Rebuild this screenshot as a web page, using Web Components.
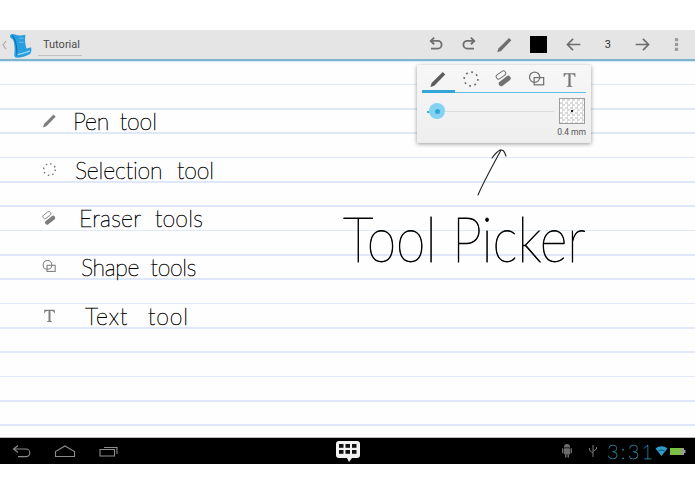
<!DOCTYPE html>
<html><head><meta charset="utf-8"><style>
html,body{margin:0;padding:0;background:#fff;font-family:Roboto,"Liberation Sans",sans-serif}
body{width:695px;height:494px;overflow:hidden}
</style></head><body>
<note-app>
  <action-bar title-text="Tutorial"></action-bar>
  <note-canvas>
    <note-row icon="pen" indent="15" track="-.1" word="4">Pen tool</note-row>
    <note-row icon="select" indent="17" track="-.15" word="8">Selection tool</note-row>
    <note-row icon="eraser" indent="21" track=".25" word="7">Eraser tools</note-row>
    <note-row icon="shape" indent="23" track="-.3" word="5">Shape tools</note-row>
    <note-row icon="text" indent="27" track=".9" word="12">Text tool</note-row>
    <tool-picker></tool-picker>
    <ink-callout></ink-callout>
  </note-canvas>
  <nav-bar></nav-bar>
</note-app>
<script>
const ICONS={
 pen:'<path d="M2.500 19l1.300-4.200L15.500 3.200l2.600 2.600L6.600 17.600z" fill="currentColor"/>',
 select:'<circle cx="10.500" cy="10.500" r="7.200" fill="none" stroke="currentColor" stroke-width="1.800" stroke-dasharray="1.900 3.750"/>',
 eraser:'<rect x="1.800" y="3.800" width="11" height="5" rx="2.300" transform="rotate(-36 7.300 6.300)" fill="none" stroke="currentColor" stroke-width="1"/><rect x="4" y="10" width="14.500" height="5.200" rx="2.500" transform="rotate(-38 11.200 12.600)" fill="currentColor"/>',
 shape:'<circle cx="8" cy="8.600" r="5.400" fill="none" stroke="currentColor" stroke-width="1.300"/><rect x="7.500" y="9" width="10" height="7.600" fill="none" stroke="currentColor" stroke-width="1.300"/>',
 text:'<path d="M4 3.500h13v4.200h-.8c-.3-2-1-2.900-3-2.900h-1.500v11.500c0 1 .4 1.300 1.900 1.400v.8H7.400v-.8c1.500-.1 1.900-.4 1.900-1.400V4.800H7.800c-2 0-2.700.9-3 2.900H4z" fill="currentColor"/>',
 undo:'<path d="M6 6.500h7a4 4 0 0 1 0 8.500H5.500" fill="none" stroke="currentColor" stroke-width="2"/><path d="M9 2.800L5.200 6.500 9 10.200" fill="none" stroke="currentColor" stroke-width="2"/>',
 redo:'<path d="M15 6.500H8a4 4 0 0 0 0 8.500h7.500" fill="none" stroke="currentColor" stroke-width="2"/><path d="M12 2.800l3.800 3.700L12 10.200" fill="none" stroke="currentColor" stroke-width="2"/>',
 left:'<path d="M18 10.500H4M10 4.300l-6.200 6.200 6.200 6.200" fill="none" stroke="currentColor" stroke-width="1.800"/>',
 right:'<path d="M3 10.500h14M11 4.300l6.200 6.200-6.200 6.200" fill="none" stroke="currentColor" stroke-width="1.800"/>',
 dots:'<rect x="8.700" y="3.500" width="3.600" height="3.400"/><rect x="8.700" y="8.800" width="3.600" height="3.400"/><rect x="8.700" y="14.100" width="3.600" height="3.400"/>'
};
function svg(n,s){return `<svg width="${s}" height="${s}" viewBox="0 0 21 21" fill="currentColor" style="display:block">${ICONS[n]}</svg>`}

customElements.define('note-app',class extends HTMLElement{constructor(){super();this.attachShadow({mode:'open'}).innerHTML=`<style>
:host{display:flex;flex-direction:column;width:695px;height:494px;padding-top:30px;box-sizing:border-box;background:#fff}
::slotted(note-canvas){flex:1;min-height:0}
</style><slot></slot><div style="height:30px;background:#fff;flex:none"></div>`}});

customElements.define('action-bar',class extends HTMLElement{constructor(){super();
const items=['undo','redo','pen','swatch','left','num','right','dots'].map(n=>{
 if(n==='swatch')return '<div class="it"><div class="sw"></div></div>';
 if(n==='num')return '<div class="it num">3</div>';
 return `<div class="it${n==='dots'?' dim':''}">${svg(n,19)}</div>`}).join('');
this.attachShadow({mode:'open'}).innerHTML=`<style>
:host{display:flex;flex:none;align-items:center;height:29px;background:#e5e5e5;border-bottom:2px solid #7db4cf;box-shadow:0 1px 1px rgba(120,190,220,.25);position:relative;z-index:2;color:#6e6e6e}
.chev{width:5px;margin-left:2px;color:#a5a5a5}
.logo{margin-left:2px;width:23px;height:26px;margin-top:2px}
.title{margin-left:6px;padding:0 5px 4px;width:34px;font:11px/13px Roboto,sans-serif;color:#4a4a4a;border-bottom:1px solid #c4c4c4;margin-top:4px;white-space:nowrap;box-sizing:content-box}
.sp{flex:1}
.acts{display:flex;padding-right:1px}
.it{width:34.500px;height:29px;display:flex;align-items:center;justify-content:center}
.dim{color:#9a9a9a}
.sw{width:17px;height:17px;background:#000}
.num{font:11px Roboto,sans-serif;color:#333}
</style>
<svg class="chev" viewBox="0 0 5 10" height="10"><path d="M4 1L1 5l3 4" fill="none" stroke="currentColor" stroke-width="1.100"/></svg>
<svg class="logo" viewBox="0 0 23 26"><path d="M1 2.800C1.500.8 4 .5 6 1.500c3 1.300 7 1.200 10.500.2C15.500 6 16 11 17.500 15.500c1.800-.3 3.500-.9 4.500-1.300.7 2.500.5 5-1 6.800-4 2-9 3.800-13 3.800-1.500 0-2.500-.8-2.800-2.500C5.700 19 6 14 5 9.500 4.500 7 3.500 6 2.500 5.500 1.500 5 .8 4 1 2.800z" fill="#2a9fe0"/><path d="M3 2.500c2.300 1.500 3.300 5 4.200 10 .6 3.500 1.200 7 .6 10" fill="none" stroke="#0f73b0" stroke-width="1.300"/><path d="M8.500 21.500c3.500-.4 8-2 12.500-3.700" fill="none" stroke="#8ed8fa" stroke-width="1.400"/><path d="M10 5c1.500.5 3 .5 4.500.2M10 9c1.500.5 3 .5 4.500.2" stroke="#6cc4f2" stroke-width="1" fill="none"/></svg>
<div class="title">${this.getAttribute('title-text')||'Tutorial'}</div>
<div class="sp"></div><div class="acts">${items}</div>`}});

customElements.define('note-canvas',class extends HTMLElement{constructor(){super();this.attachShadow({mode:'open'}).innerHTML=`<style>
:host{display:flex;flex-direction:column;position:relative;box-sizing:border-box;padding:35.500px 0 0 41px;overflow:hidden;
background:#fefefe repeating-linear-gradient(#fefefe 0 22.800px,#dfe8f8 22.800px 24.330px)}
</style><slot></slot>`}});

customElements.define('note-row',class extends HTMLElement{constructor(){super();
const g=n=>this.getAttribute(n);
this.attachShadow({mode:'open'}).innerHTML=`<style>
:host{display:flex;align-items:center;height:48.700px;color:#000}
.ic{width:17px;height:17px;color:#7d7d7d;flex:none}
.tx{margin-left:${g('indent')}px;font:100 23px/30px Lato,sans-serif;letter-spacing:${g('track')}px;word-spacing:${g('word')}px;white-space:nowrap;color:#000;-webkit-text-stroke:.55px #000}
</style><div class="ic">${svg(g('icon'),17)}</div><div class="tx"><slot></slot></div>`}});

customElements.define('tool-picker',class extends HTMLElement{constructor(){super();
const tabs=['pen','select','eraser','shape','text'].map(n=>`<div class="tab">${svg(n,n==='text'?19:20)}</div>`).join('');
const check='repeating-conic-gradient(#dadada 0 25%,#fff 0 50%) 0 0/5px 5px';
this.attachShadow({mode:'open'}).innerHTML=`<style>
:host{position:absolute;left:417px;top:4px;width:174px;height:78px;box-sizing:border-box;padding:0 5px;background:linear-gradient(#f7f7f7,#eeeeee);box-shadow:0 1px 4px rgba(0,0,0,.4);border-radius:1px;display:flex;flex-direction:column;z-index:3}
.tabs{display:flex;height:27px;flex:none;border-bottom:1px solid #5fbfe6;position:relative;color:#727272}
.tabs .tab:first-child{color:#5c5c5c}
.tab{flex:1;display:flex;align-items:center;justify-content:center;padding-top:1px}
.act{position:absolute;left:0;bottom:-1px;width:33px;height:3px;background:#33a5d8}
.row{display:flex;margin-top:5px;height:26px}
.sl{position:relative;width:127px;margin-left:5px;height:26px;flex:none}
.tr{position:absolute;left:0;right:0;top:13px;height:1px;background:#dcdcdc}
.on{position:absolute;left:0;top:12.500px;width:10px;height:2px;background:#33b5e5}
.th{position:absolute;left:2px;top:5px;width:16px;height:16px;border-radius:50%;background:#84d2f2;display:flex;align-items:center;justify-content:center}
.th i{display:block;width:5px;height:5px;border-radius:50%;background:#2fa8dc}
.pv{margin-left:5px;width:26px;height:26px;box-sizing:border-box;border:1px solid #9c9c9c;background:${check};position:relative}
.pv i{position:absolute;left:11px;top:11px;width:1.500px;height:1.500px;background:#222}
.lab{font:8.500px/10px Roboto,sans-serif;color:#555;text-align:right;margin-top:3px}
</style><div class="tabs">${tabs}<div class="act"></div></div>
<div class="row"><div class="sl"><div class="tr"></div><div class="on"></div><div class="th"><i></i></div></div><div class="pv"><i></i></div></div>
<div class="lab">0.4 mm</div>`}});

customElements.define('ink-callout',class extends HTMLElement{constructor(){super();this.attachShadow({mode:'open'}).innerHTML=`<style>
:host{position:absolute;left:340px;top:80px;width:260px;height:130px;display:block;color:#111}
svg{position:absolute;left:135px;top:4px}
.t{position:absolute;left:3px;top:62px;font:100 56px/70px Lato,sans-serif;white-space:nowrap;color:#000;-webkit-text-stroke:.7px #000;transform-origin:0 50%;transform:scale(.955,1.12)}
</style>
<svg width="40" height="52" viewBox="0 0 40 52"><path d="M3 50C9 36 17 22 26 5M17 13c3-4 6-7 8-8 3 0 4 0 6 6" fill="none" stroke="#222" stroke-width="1.100" stroke-linecap="round"/></svg>
<div class="t">Tool Picker</div>`}});

customElements.define('nav-bar',class extends HTMLElement{constructor(){super();this.attachShadow({mode:'open'}).innerHTML=`<style>
:host{display:flex;flex:none;align-items:center;height:26px;background:#000;border-top:1px solid #b9b9b9;position:relative;color:#8d8d8d}
.l{display:flex;align-items:center;flex:none}
.cen{position:absolute;left:335px;top:2px}
.sp{flex:1}
.clk{font:100 20px/26px Lato,sans-serif;letter-spacing:2.200px;color:#3d9cbd;width:47px;margin-left:9px;white-space:nowrap;-webkit-text-stroke:.3px #3d9cbd}
.r{display:flex;align-items:center;padding-right:9px}
</style>
<div class="l">
<svg style="margin-left:12px" width="20" height="14" viewBox="0 0 20 14"><path d="M6 1.500L1.500 5 6 8.500M2 5h12a3.800 3.800 0 0 1 0 7.600H6" fill="none" stroke="currentColor" stroke-width="1.100"/></svg>
<svg style="margin-left:22px" width="22" height="13" viewBox="0 0 22 13"><path d="M1.500 11.500V6.500L11 1l9.500 5.500v5z" fill="none" stroke="currentColor" stroke-width="1.100"/></svg>
<svg style="margin-left:23px" width="20" height="12" viewBox="0 0 20 12"><path d="M1 4.500h14.500V11H1zM5 2.500h13V9" fill="none" stroke="currentColor" stroke-width="1.100"/></svg>
</div>
<svg class="cen" width="26" height="23" viewBox="0 0 26 23"><path d="M4 1h18a3 3 0 0 1 3 3v11a3 3 0 0 1-3 3h-5l-3 4-2-4H4a3 3 0 0 1-3-3V4a3 3 0 0 1 3-3z" fill="#f2f2f2"/><g fill="#111"><rect x="4" y="4" width="4.500" height="3.800"/><rect x="10.500" y="4" width="4.500" height="3.800"/><rect x="17" y="4" width="4.500" height="3.800"/><rect x="4" y="10" width="4.500" height="3.800"/><rect x="10.500" y="10" width="4.500" height="3.800"/><rect x="17" y="10" width="4.500" height="3.800"/></g></svg>
<div class="sp"></div>
<div class="r">
<svg width="12" height="14" viewBox="0 0 12 14" fill="#6d6d6d"><path d="M3 3a3 3 0 0 1 6 0v.5H3z"/><rect x="3" y="4.200" width="6" height="6.300" rx=".8"/><rect x="1" y="4.300" width="1.400" height="5"/><rect x="9.600" y="4.300" width="1.400" height="5"/><rect x="4" y="10.500" width="1.500" height="3"/><rect x="6.500" y="10.500" width="1.500" height="3"/></svg>
<svg style="margin-left:15px" width="10" height="14" viewBox="0 0 10 14" fill="none" stroke="#7a7a7a" stroke-width="1"><path d="M5 1v12M1.500 4v2.500L5 9M8.500 3v2L5 7.500"/></svg>
<div class="clk">3:31</div>
<svg width="13" height="11" viewBox="0 0 13 11" style="margin-left:1px"><path d="M.5 2.500a9 9 0 0 1 12 0L6.500 10z" fill="#2f9cc7"/><path d="M3.500 5a5 5 0 0 1 6 0" stroke="#0a3c52" stroke-width=".8" fill="none"/></svg>
<svg width="16" height="9" viewBox="0 0 16 9" style="margin-left:2px"><rect x="0" y="1" width="13" height="7" fill="#7ac143"/><rect x="11" y="1" width="3" height="7" fill="#9a9a9a"/><rect x="14" y="3" width="1.500" height="3" fill="#9a9a9a"/></svg>
</div>`}});
</script>
</body></html>
